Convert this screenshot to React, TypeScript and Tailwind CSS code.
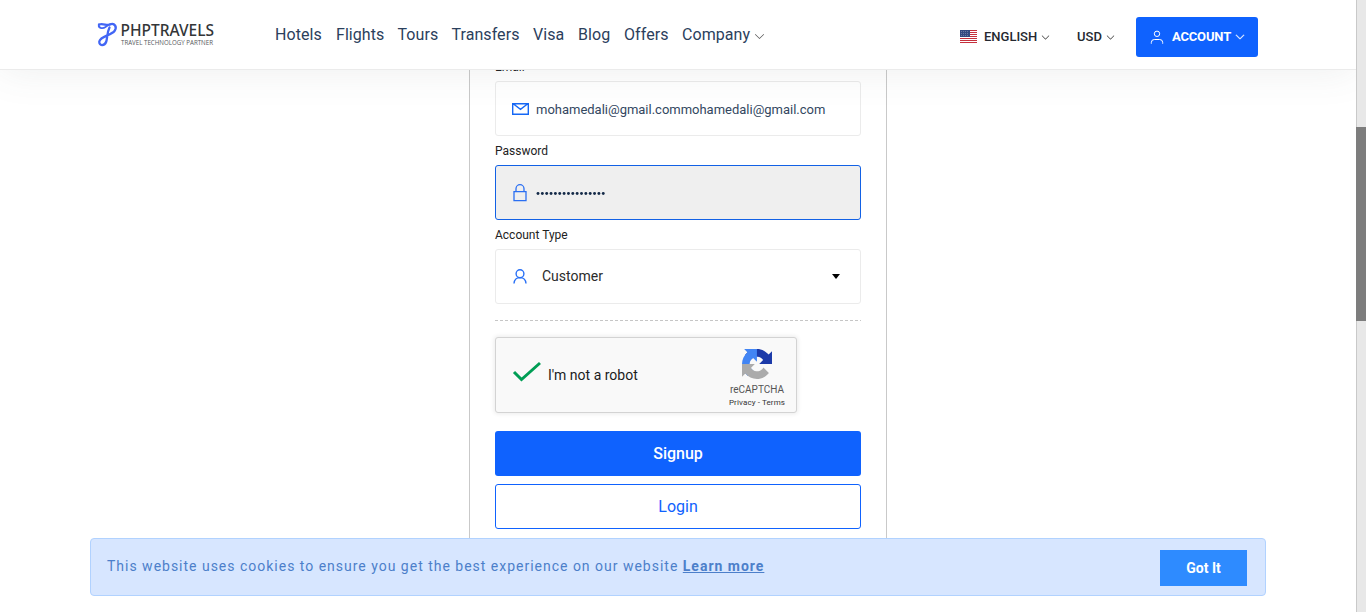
import React from "react";

const Chevron = ({ className }: { className: string }) => (
  <svg viewBox="0 0 16 16" className={className} fill="currentColor">
    <path
      fillRule="evenodd"
      d="M1.646 4.646a.5.5 0 0 1 .708 0L8 10.293l5.646-5.647a.5.5 0 0 1 .708.708l-6 6a.5.5 0 0 1-.708 0l-6-6a.5.5 0 0 1 0-.708z"
    />
  </svg>
);

const Logo = () => (
  <svg className="ml-24 h-[34px] w-[120px] shrink-0" viewBox="0 0 120 34">
    <g fill="none" stroke="#4266f5" strokeLinecap="round" strokeLinejoin="round">
      <path
        strokeWidth="2.300"
        d="M3 6.500C7 5 11 8 14 6.500C18.500 4.500 21.500 9 18.500 13C15 17.500 4.500 18 3.300 23.500C2.800 28 8.500 28.500 10.300 23.500C11.500 19 11 14.500 13.500 9.500"
      />
      <path strokeWidth="1.800" d="M3 6.500C1.800 9.500 6 11.500 9.500 9C12 7 15 4.500 17.500 6.500" />
    </g>
    <text x="24.500" y="18" textLength="93.500" lengthAdjust="spacingAndGlyphs" fontSize="15.500" fontWeight="500" fill="#333638" fontFamily="Noto Sans, sans-serif">
      PHPTRAVELS
    </text>
    <text x="25" y="27" textLength="92" lengthAdjust="spacingAndGlyphs" fontSize="6.600" fill="#55585b" fontFamily="Open Sans, sans-serif">
      TRAVEL TECHNOLOGY PARTNER
    </text>
  </svg>
);

const Flag = () => (
  <svg className="mt-[13px] h-[13px] w-[17px] self-start" viewBox="0 0 17 13" shapeRendering="crispEdges">
    <rect width="17" height="13" fill="#fff" />
    {[0, 2, 4, 6, 8, 10, 12].map((y) => (
      <rect key={y} y={y} width="17" height="1" fill="#c5303c" />
    ))}
    <rect width="10" height="7" fill="#354a80" />
    {[1, 3, 5].map((y) =>
      [1, 3, 5, 7].map((x) => <rect key={`${x}-${y}`} x={x} y={y} width="1" height="1" fill="#6b7aa3" />)
    )}
  </svg>
);

const Header = () => (
  <header className="absolute inset-x-0 top-0 z-10 flex h-[70px] items-start border-b border-[#ebebeb] bg-white shadow-[0_0_40px_rgba(82,85,90,0.1)]">
    <div className="flex pt-[18px]">
      <Logo />
    </div>
    <nav className="ml-[59px] flex pt-[23px] text-[16px] leading-6 tracking-[0.06px] text-[#2b405c]">
      <a className="w-[61px]">Hotels</a>
      <a className="w-[61.500px]">Flights</a>
      <a className="w-[54px]">Tours</a>
      <a className="w-[81.500px]">Transfers</a>
      <a className="w-[45px]">Visa</a>
      <a className="w-[46px]">Blog</a>
      <a className="w-[58px]">Offers</a>
      <a className="flex w-[84px] items-center gap-1">
        Company
        <Chevron className="mt-0.5 size-[11px] shrink-0 text-[#555]" />
      </a>
    </nav>
    <div className="mt-[17px] mr-[98px] ml-auto flex h-[40px] shrink-0 items-center text-[13px] font-medium text-[#252830]">
      <Flag />
      <span className="ml-[7px] w-[53px]">ENGLISH</span>
      <Chevron className="ml-[4px] size-[9px] text-[#333]" />
      <span className="ml-[27px] w-[25px]">USD</span>
      <Chevron className="ml-[4px] size-[9px] text-[#333]" />
      <button className="ml-[21px] flex h-10 w-[122px] items-center rounded-[3px] bg-[#0f62fe] pl-[14px] font-bold text-white">
        <svg className="h-[14px] w-[14px]" viewBox="0 0 14 14" fill="none" stroke="#fff">
          <circle cx="7" cy="3.800" r="2.700" />
          <path d="M1.300 13.700v-1.200a3 3 0 0 1 3-3h5.400a3 3 0 0 1 3 3v1.200" />
        </svg>
        <span className="ml-[7px] w-[61px] tracking-[-0.15px]">ACCOUNT</span>
        <Chevron className="ml-[3px] size-[10px] stroke-white stroke-[0.8]" />
      </button>
    </div>
  </header>
);

const Label = ({ children }: { children: React.ReactNode }) => (
  <div className="h-[29px] pt-[5px] text-[12px] leading-5 text-[#222]">{children}</div>
);

const Recaptcha = () => (
  <div className="mt-4 flex h-[76px] w-[302px] rounded-[3px] border border-[#d3d3d3] bg-[#f9f9f9] shadow-[0_0_4px_1px_rgba(0,0,0,0.08)]">
    <svg className="mt-[23px] ml-4 h-[24px] w-[30px]" viewBox="0 0 30 24" fill="none" stroke="#009e55" strokeWidth="3">
      <path d="M2 11l7.500 7.500L28 2" />
    </svg>
    <span className="mt-[27px] ml-[6px] text-[14px] leading-5 text-[#1c1c1c]">I'm not a robot</span>
    <div className="mr-[10px] ml-auto flex w-[58px] flex-col items-center pt-[11px] text-[#555]">
      <svg className="size-[30px]" viewBox="0 0 64 64">
        <path
          fill="#1c3aa9"
          d="M64 31.955l-.033-1.370V4.687l-7.160 7.160C50.948 4.674 42.033.093 32.050.093c-10.390 0-19.622 4.960-25.453 12.650l11.736 11.860a15.550 15.550 0 0 1 4.754-5.334c2.050-1.600 4.952-2.906 8.968-2.906.485 0 .860.057 1.135.163 4.976.393 9.288 3.140 11.828 7.124l-8.307 8.307L64 31.953"
        />
        <path
          fill="#4285f4"
          d="M31.862.094l-1.370.033H4.594l7.160 7.160C4.580 13.147 0 22.060 0 32.046c0 10.390 4.960 19.622 12.650 25.453l11.860-11.736a15.550 15.550 0 0 1-5.334-4.754c-1.600-2.050-2.906-4.952-2.906-8.968 0-.485.057-.860.163-1.135.393-4.976 3.140-9.288 7.124-11.828l8.307 8.307L31.860.095"
        />
        <path
          fill="#ababab"
          d="M0 32.045l.033 1.370v25.898l7.160-7.160c5.860 7.173 14.774 11.754 24.760 11.754 10.390 0 19.622-4.960 25.453-12.650l-11.736-11.860a15.550 15.550 0 0 1-4.754 5.334c-2.050 1.600-4.952 2.906-8.968 2.906-.485 0-.860-.057-1.135-.163-4.976-.393-9.288-3.140-11.828-7.124l8.307-8.307c-10.522.040-22.400.066-27.295-.005"
        />
      </svg>
      <span className="mt-[4px] text-[10px] leading-[14px] whitespace-nowrap">reCAPTCHA</span>
      <span className="text-[8px] leading-[11px] tracking-[0.12px] whitespace-nowrap text-[#333]">Privacy - Terms</span>
    </div>
  </div>
);

const SignupForm = () => (
  <main className="mx-auto h-[570px] w-[418px] border-x border-[#c9c9c9] px-[25px] pt-[52px]">
    <Label>Email</Label>
    <div className="flex h-[55px] items-center rounded-[3px] border border-[#ebebeb] pl-[15.500px] text-[13px] text-[#33475f]">
      <svg className="h-[12px] w-[17px]" viewBox="0 0 17 12" fill="none" stroke="#1668f5" strokeWidth="1.400">
        <path d="M.7.7h15.600v10.600H.7zM1.500 1l7 5.300 7-5.300" />
      </svg>
      <span className="mt-[2px] ml-[7.500px] tracking-[-0.01px]">mohamedali@gmail.commohamedali@gmail.com</span>
    </div>
    <Label>Password</Label>
    <div className="flex h-[55px] items-center rounded-[3px] border border-[#1261e5] bg-[#efefef] pl-[17px]">
      <svg className="h-[18px] w-[14px]" viewBox="0 0 14 18" fill="none" stroke="#2b6ff2" strokeWidth="1.300">
        <path d="M1 7.600h12v9H1zM3 7.600V4.700a4 4 0 0 1 8 0v2.900" />
      </svg>
      <svg className="mt-[2px] ml-[9px] h-[5px] w-[72px]" viewBox="0 0 72 5" fill="#142a48">
        {Array.from({ length: 16 }, (_, i) => (
          <circle key={i} cx={2 + i * 4.35} cy="2.500" r="1.450" />
        ))}
      </svg>
    </div>
    <Label>Account Type</Label>
    <div className="flex h-[55px] items-center rounded-[3px] border border-[#ebebeb] pl-[17px] text-[14px] text-[#2b2b2b]">
      <svg className="h-[15px] w-[14px]" viewBox="0 0 14 15" fill="none" stroke="#2870f6" strokeWidth="1.400">
        <circle cx="7" cy="4.700" r="3.900" />
        <path d="M1 14.500c.2-3 2-5.800 6-5.900 4 .1 5.800 2.900 6 5.900" />
      </svg>
      <span className="ml-[15px]">Customer</span>
      <svg className="mr-5 ml-auto h-[5px] w-[8px]" viewBox="0 0 8 5">
        <path d="M0 0h8L4 5z" />
      </svg>
    </div>
    <svg className="mt-4 block h-px w-full">
      <path d="M0 .5h366" stroke="#c6c6c6" strokeDasharray="3 2" />
    </svg>
    <Recaptcha />
    <button className="mt-[18px] block h-[45px] w-full rounded-[3px] bg-[#0f62fe] text-[16px] font-medium tracking-[-0.03px] text-white">Signup</button>
    <button className="mt-2 block h-[45px] w-full rounded-[3px] border border-[#0f62fe] text-[16px] text-[#0f62fe]">Login</button>
  </main>
);

const CookieBar = () => (
  <div className="absolute bottom-4 left-[90px] z-20 flex h-[58px] w-[1176px] items-center rounded-[4px] border border-[#b1d2ff] bg-[#d7e6ff] pr-[18px] pl-4 text-[14px] text-[#4c7fca]">
    <p className="-mt-[2px] tracking-[0.99px]">
      This website uses cookies to ensure you get the best experience on our website{" "}
      <a className="font-bold underline">Learn more</a>
    </p>
    <button className="mt-[2px] ml-auto h-9 w-[87px] bg-[#2e8bff] font-bold text-white">Got It</button>
  </div>
);

export default function App() {
  return (
    <div className="flex h-[612px] w-[1366px] overflow-hidden bg-white font-[Roboto,sans-serif]">
      <div className="relative h-full w-[1356px] overflow-hidden">
        <Header />
        <SignupForm />
        <CookieBar />
      </div>
      <div className="h-full w-[10px] border-l border-[#c9c9c9] bg-[#e8e8e8] pt-[127px]">
        <div className="-ml-px h-[194px] w-[10px] bg-[#7d7d7d]" />
      </div>
    </div>
  );
}
